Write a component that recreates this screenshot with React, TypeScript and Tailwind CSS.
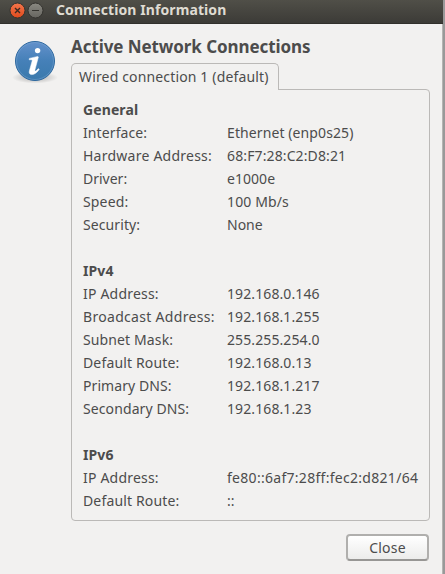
import React from "react";

type Row = { label: string; value: string; lt?: string; vt?: string };
type Section = { title: string; rows: Row[] };

const sections: Section[] = [
  {
    title: "General",
    rows: [
      { label: "Interface:", value: "Ethernet (enp0s25)", lt: "tracking-[0.1px]", vt: "tracking-[0.1px]" },
      { label: "Hardware Address:", value: "68:F7:28:C2:D8:21", lt: "tracking-[0.24px]", vt: "tracking-[0.12px]" },
      { label: "Driver:", value: "e1000e", vt: "tracking-[0.05px]" },
      { label: "Speed:", value: "100 Mb/s", lt: "tracking-[0.15px]", vt: "tracking-[0.12px]" },
      { label: "Security:", value: "None", lt: "tracking-[0.1px]" },
    ],
  },
  {
    title: "IPv4",
    rows: [
      { label: "IP Address:", value: "192.168.0.146", lt: "tracking-[0.2px]", vt: "tracking-[0.1px]" },
      { label: "Broadcast Address:", value: "192.168.1.255", lt: "tracking-[0.31px]", vt: "tracking-[0.1px]" },
      { label: "Subnet Mask:", value: "255.255.254.0", lt: "tracking-[0.12px]", vt: "tracking-[0.1px]" },
      { label: "Default Route:", value: "192.168.0.13", lt: "tracking-[0.15px]", vt: "tracking-[0.1px]" },
      { label: "Primary DNS:", value: "192.168.1.217", lt: "tracking-[0.08px]", vt: "tracking-[0.1px]" },
      { label: "Secondary DNS:", value: "192.168.1.23", lt: "tracking-[0.1px]", vt: "tracking-[0.1px]" },
    ],
  },
  {
    title: "IPv6",
    rows: [
      { label: "IP Address:", value: "fe80::6af7:28ff:fec2:d821/64", lt: "tracking-[0.2px]", vt: "tracking-[0.29px]" },
      { label: "Default Route:", value: "::", lt: "tracking-[0.15px]" },
    ],
  },
];

function InfoIcon() {
  return (
    <svg width="48" height="48" viewBox="0 0 48 48" className="shrink-0">
      <defs>
        <linearGradient id="ball" x1="0" y1="0" x2="0" y2="1">
          <stop offset="0" stopColor="#6391cb" />
          <stop offset="0.5" stopColor="#4580b8" />
          <stop offset="1" stopColor="#3a79ac" />
        </linearGradient>
        <radialGradient id="shade">
          <stop offset="0" stopColor="#000" stopOpacity="0.3" />
          <stop offset="1" stopColor="#000" stopOpacity="0" />
        </radialGradient>
      </defs>
      <ellipse cx="24" cy="40.5" rx="23" ry="6" fill="url(#shade)" />
      <circle cx="24" cy="24" r="19.5" fill="url(#ball)" stroke="#2d689f" />
      <circle cx="24" cy="24" r="18.5" fill="none" stroke="#86afd9" strokeOpacity="0.4" />
      <circle cx="26.6" cy="13.6" r="2.7" fill="#fff" />
      <path
        d="M18.4 21.4 L26.8 19.4 L27.4 20 L24 32.6 C23.6 34.4 24.4 34.4 25.4 33.6 L27.4 31.6 L28.2 32.4 C25.8 35.8 23.4 37.6 20.8 37.6 C18.6 37.6 17.8 36 18.4 33.8 L21.2 23.8 C21.4 22.8 20.6 22.6 18.2 22.8 Z"
        fill="#fff"
        stroke="#fff"
        strokeWidth="0.5"
      />
    </svg>
  );
}

function TitleBar() {
  return (
    <div className="flex h-6 items-center border-b border-[#31302c] bg-linear-to-b from-[#504f48] to-[#3c3b37] pl-[9px]">
      <svg width="36" height="20" viewBox="0 0 36 20" className="mt-[-3px] shrink-0">
        <defs>
          <linearGradient id="close" x1="0" y1="0" x2="0" y2="1">
            <stop offset="0" stopColor="#f4764c" />
            <stop offset="1" stopColor="#df4a1c" />
          </linearGradient>
          <linearGradient id="min" x1="0" y1="0" x2="0" y2="1">
            <stop offset="0" stopColor="#8a8982" />
            <stop offset="1" stopColor="#66655f" />
          </linearGradient>
        </defs>
        <circle cx="8.5" cy="10.5" r="7.5" fill="url(#close)" stroke="#33322e" />
        <path d="M6 8l5 5M11 8l-5 5" stroke="#3a2a22" strokeWidth="1.4" />
        <circle cx="26.5" cy="10.5" r="7.5" fill="url(#min)" stroke="#33322e" />
        <path d="M23 10.5h7" stroke="#35342f" />
      </svg>
      <span className="mt-[-4px] ml-[11px] text-[14px] font-bold tracking-[0.09px] text-[#dfdbd2]">
        Connection Information
      </span>
    </div>
  );
}

export default function App() {
  return (
    <div className="flex h-[574px] w-[445px] overflow-hidden bg-[#999999] font-['Noto_Sans','Open_Sans',sans-serif] text-[14px] whitespace-nowrap text-[#4c4c4c]">
      <div className="flex w-[443px] flex-col">
        <TitleBar />
        <div className="flex min-h-0 flex-1 border-r border-[#b5b4b2] bg-[#f2f1f0] pt-[13px] pl-[11px]">
          <InfoIcon />
          <main className="ml-3 w-[359px]">
            <h1 className="h-[26px] text-[17px] leading-[20px] font-bold tracking-[-0.08px]">
              Active Network Connections
            </h1>
            <div className="relative z-10 flex h-[27px] w-[208px] items-center rounded-t-[5px] border border-b-0 border-[#bbb9b7] bg-[#f2f1f0] pb-px pl-[7px] tracking-[0.15px]">
              Wired connection 1 (default)
            </div>
            <section className="-mt-px h-[432px] rounded-[4px] rounded-tl-none border border-[#bbb9b7] pt-2 pl-[11px]">
              {sections.map((s) => (
                <div key={s.title} className="mb-[23px] leading-[23px]">
                  <h2 className="h-[23px] font-bold tracking-[0.1px]">{s.title}</h2>
                  {s.rows.map((r) => (
                    <div key={r.label} className="flex h-[23px]">
                      <span className="w-36">
                        <span className={r.lt}>{r.label}</span>
                      </span>
                      <span className={r.vt}>{r.value}</span>
                    </div>
                  ))}
                </div>
              ))}
            </section>
            <div className="mt-[13px] flex justify-end pr-px">
              <button className="h-[27px] w-[83px] rounded-[4px] border-2 border-[#b0afad] border-b-[#979694] bg-linear-to-b from-white to-[#ececeb] leading-[22px] tracking-[0.2px]">
                Close
              </button>
            </div>
          </main>
        </div>
      </div>
    </div>
  );
}
